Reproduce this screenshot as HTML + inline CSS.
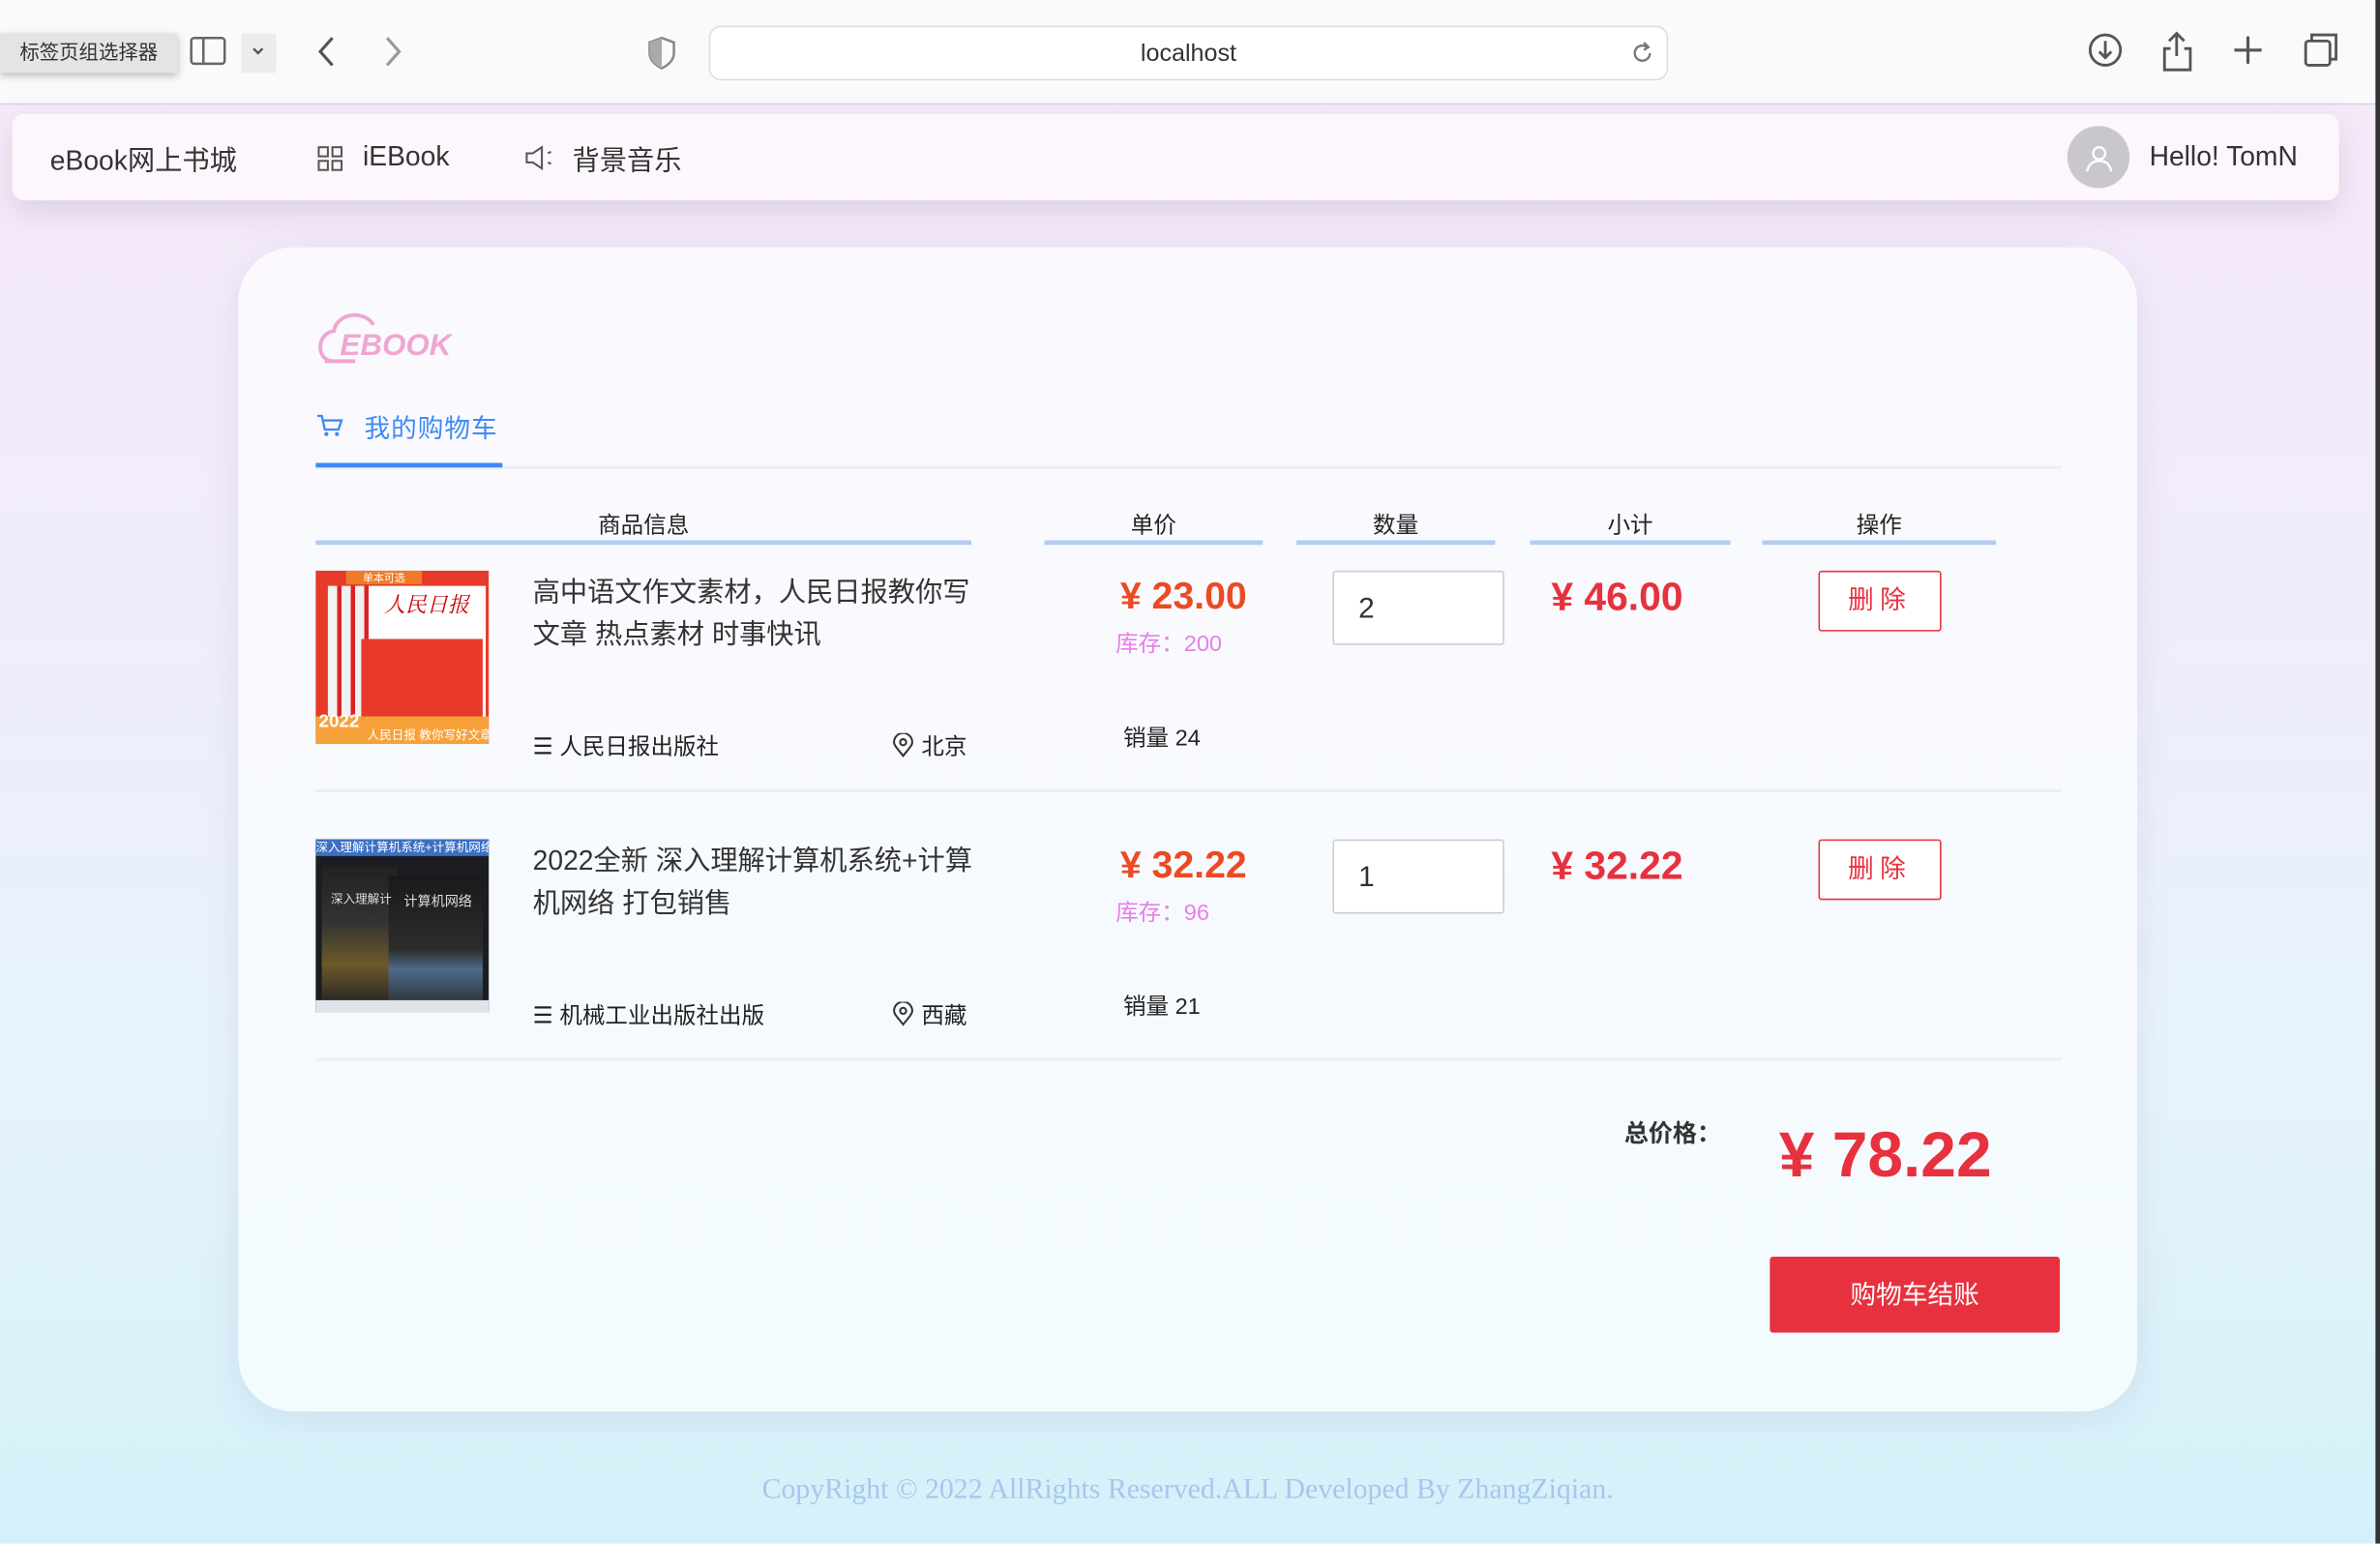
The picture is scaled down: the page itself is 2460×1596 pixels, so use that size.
<!DOCTYPE html>
<html><head><meta charset="utf-8"><style>
html,body{margin:0;padding:0;width:2460px;height:1596px;overflow:hidden;background:#fff}
#w{position:absolute;left:0;top:0;width:1568px;height:1017px;transform:scale(1.5689);transform-origin:0 0;font-family:"Liberation Sans","Noto Sans CJK SC",sans-serif;color:#333;
background:linear-gradient(180deg,#f6e9f8 0%,#f1ecfb 35%,#e6f3fb 70%,#d4f1f9 100%)}
.a{position:absolute;white-space:nowrap}
.tb{left:0;top:0;width:1568px;height:68px;background:#f9fafb;border-bottom:1px solid #d9cfe0}
.nav{left:8px;top:75px;width:1533px;height:57px;background:#fdf6fc;border-radius:8px;box-shadow:0 8px 20px rgba(150,130,170,.25)}
.card{left:157px;top:163px;width:1251px;height:767px;border-radius:36px;background:linear-gradient(180deg,#fbf9fe,#f3fbfe);box-shadow:0 4px 22px rgba(150,140,190,.18)}
.hd{font-size:15px;color:#222;top:335px;text-align:center}
.bar{height:3px;background:#b3ccf5;top:356px}
.t{font-size:18px;color:#333;line-height:28px}
.pr{font-size:25px;font-weight:bold;color:#ec4a24}
.st{font-size:15px;color:#e77fe6}
.sub{font-size:26px;font-weight:bold;color:#e8313e}
.inp{width:113px;height:49px;border:1px solid #ccc;background:#fff;font-size:19px;line-height:49px;padding-left:16px;box-sizing:border-box;border-radius:2px}
.del{width:81px;height:40px;border:1px solid #e8313e;box-sizing:border-box;color:#e8313e;font-size:17px;text-align:center;line-height:38px;letter-spacing:4px;background:#fff;border-radius:2px}
.sm{font-size:15px;color:#222}
.div{height:2px;background:#eceef2;left:208px;width:1150px}
</style></head><body><div id="w">
<div class="a tb"></div>
<div class="a" style="left:0;top:22px;width:117px;height:26px;background:#e4e4e4;box-shadow:0 2px 5px rgba(0,0,0,.25);font-size:13px;line-height:26px;text-align:center;color:#333">标签页组选择器</div>
<svg class="a" style="left:124px;top:22px" width="60" height="26"><rect x="2" y="3" width="22" height="17" rx="2" fill="none" stroke="#666" stroke-width="1.6"/><line x1="10" y1="3" x2="10" y2="20" stroke="#666" stroke-width="1.6"/><rect x="35" y="-4" width="23" height="34" rx="6" fill="#ececec"/><path d="M43 10l3 3 3-3" fill="none" stroke="#555" stroke-width="1.5"/></svg>
<svg class="a" style="left:200px;top:20px" width="80" height="28"><path d="M19 5l-8 9 8 9" fill="none" stroke="#555" stroke-width="2"/><path d="M55 5l8 9-8 9" fill="none" stroke="#999" stroke-width="2"/></svg>
<svg class="a" style="left:426px;top:24px" width="20" height="22"><path d="M10 1l8 3v7c0 5-4 8-8 10-4-2-8-5-8-10V4z" fill="none" stroke="#888" stroke-width="1.6"/><path d="M10 1v20c-4-2-8-5-8-10V4z" fill="#aaa"/></svg>
<div class="a" style="left:467px;top:17px;width:630px;height:34px;border:1px solid #ddd;border-radius:8px;background:#fff;font-size:16px;line-height:36px;text-align:center;color:#333">localhost</div>
<svg class="a" style="left:1073px;top:26px" width="18" height="18"><path d="M14 9a5 5 0 1 1-2-4" fill="none" stroke="#777" stroke-width="1.5"/><path d="M10 2l3 3-3 2" fill="none" stroke="#777" stroke-width="1.5"/></svg>
<svg class="a" style="left:1372px;top:18px" width="175" height="32"><circle cx="15" cy="15" r="10" fill="none" stroke="#555" stroke-width="1.8"/><path d="M15 9v11M11 16l4 4 4-4" fill="none" stroke="#555" stroke-width="1.8"/><path d="M58 14h-4v14h17V14h-4M62 4v15M57 9l5-5 5 5" fill="none" stroke="#555" stroke-width="1.8"/><path d="M109 6v18M100 15h18" stroke="#555" stroke-width="2"/><rect x="147" y="9" width="16" height="16" rx="2" fill="none" stroke="#555" stroke-width="1.8"/><path d="M151 9V5h16v16h-4" fill="none" stroke="#555" stroke-width="1.8"/></svg>
<div class="a" style="left:1565px;top:0;width:3px;height:1017px;background:#333"></div>

<div class="a nav"></div>
<div class="a" style="left:33px;top:92px;font-size:18px;color:#333">eBook网上书城</div>
<svg class="a" style="left:209px;top:96px" width="17" height="17"><g fill="none" stroke="#555" stroke-width="1.3"><rect x="1" y="1" width="6" height="6"/><rect x="10" y="1" width="6" height="6"/><rect x="1" y="10" width="6" height="6"/><rect x="10" y="10" width="6" height="6"/></g></svg>
<div class="a" style="left:239px;top:93px;font-size:18px;color:#333">iEBook</div>
<svg class="a" style="left:345px;top:95px" width="22" height="18"><path d="M2 6h4l6-4v14l-6-4H2z" fill="none" stroke="#555" stroke-width="1.3"/><path d="M16 6l2-1M16 12l2 1" stroke="#555" stroke-width="1.3"/></svg>
<div class="a" style="left:377px;top:92px;font-size:18px;color:#333">背景音乐</div>
<div class="a" style="left:1362px;top:83px;width:41px;height:41px;border-radius:50%;background:#c9c6cc"></div>
<svg class="a" style="left:1372px;top:93px" width="22" height="22"><circle cx="11" cy="8" r="4" fill="none" stroke="#fff" stroke-width="1.5"/><path d="M3 20c1-5 4-7 8-7s7 2 8 7" fill="none" stroke="#fff" stroke-width="1.5"/></svg>
<div class="a" style="left:1416px;top:93px;font-size:18px;color:#333">Hello! TomN</div>

<div class="a card"></div>
<svg class="a" style="left:206px;top:200px" width="95" height="42"><path d="M14 38C2 38 2 20 14 18c2-12 20-14 26-4" fill="none" stroke="#f0a6d2" stroke-width="2.5"/><path d="M8 38h20" stroke="#f0a6d2" stroke-width="2.5"/><text x="18" y="34" font-family="Liberation Sans" font-style="italic" font-weight="bold" font-size="20" fill="#f0a6d2">EBOOK</text></svg>
<svg class="a" style="left:208px;top:272px" width="18" height="17"><path d="M1 2h3l2 9h9l2-6H5" fill="none" stroke="#3d8af7" stroke-width="1.5"/><circle cx="7" cy="14" r="1.3" fill="#3d8af7"/><circle cx="14" cy="14" r="1.3" fill="#3d8af7"/></svg>
<div class="a" style="left:240px;top:268px;font-size:17px;color:#3d8af7;letter-spacing:0.6px">我的购物车</div>
<div class="a" style="left:208px;top:307px;width:1150px;height:2px;background:#eceef2"></div>
<div class="a" style="left:208px;top:305px;width:123px;height:3px;background:#3d8af7"></div>

<div class="a hd" style="left:208px;width:432px">商品信息</div>
<div class="a hd" style="left:688px;width:144px">单价</div>
<div class="a hd" style="left:854px;width:131px">数量</div>
<div class="a hd" style="left:1008px;width:132px">小计</div>
<div class="a hd" style="left:1161px;width:154px">操作</div>
<div class="a bar" style="left:208px;width:432px"></div>
<div class="a bar" style="left:688px;width:144px"></div>
<div class="a bar" style="left:854px;width:131px"></div>
<div class="a bar" style="left:1008px;width:132px"></div>
<div class="a bar" style="left:1161px;width:154px"></div>

<!-- row 1 -->
<div class="a" style="left:208px;top:376px;width:114px;height:114px;background:#e63a2a;overflow:hidden">
<div class="a" style="left:8px;top:10px;width:104px;height:90px;background:linear-gradient(90deg,#f1f1f1 0 6px,#d22 6px 9px,#f1f1f1 9px 15px,#d22 15px 18px,#f1f1f1 18px 24px,#d22 24px 27px,#fff 27px)"></div>
<div class="a" style="left:30px;top:45px;width:80px;height:52px;background:#e8392a"></div>
<div class="a" style="left:20px;top:0;width:50px;height:9px;background:#f07a2a;font-size:7px;color:#fff;text-align:center">单本可选</div>
<div class="a" style="left:45px;top:12px;font-size:14px;font-style:italic;color:#c00;font-family:'Liberation Serif','Noto Serif CJK SC',serif">人民日报</div>
<div class="a" style="left:0;top:96px;width:114px;height:18px;background:#f6a13a"></div>
<div class="a" style="left:2px;top:92px;font-size:12px;color:#fff;font-weight:bold">2022</div>
<div class="a" style="left:34px;top:103px;font-size:8px;color:#fff">人民日报 教你写好文章</div>
</div>
<div class="a t" style="left:351px;top:376px">高中语文作文素材，人民日报教你写<br>文章 热点素材 时事快讯</div>
<div class="a sm" style="left:351px;top:481px">☰ 人民日报出版社</div>
<svg class="a" style="left:588px;top:483px" width="14" height="16"><path d="M7 15C3 10 1 8 1 6a6 6 0 0 1 12 0c0 2-2 4-6 9z" fill="none" stroke="#333" stroke-width="1.3"/><circle cx="7" cy="6" r="2" fill="none" stroke="#333" stroke-width="1.3"/></svg>
<div class="a sm" style="left:607px;top:481px">北京</div>
<div class="a pr" style="left:738px;top:379px">¥ 23.00</div>
<div class="a st" style="left:735px;top:413px">库存：200</div>
<div class="a sm" style="left:740px;top:475px">销量 24</div>
<div class="a inp" style="left:878px;top:376px">2</div>
<div class="a sub" style="left:1022px;top:378px">¥ 46.00</div>
<div class="a del" style="left:1198px;top:376px">删除</div>
<div class="a div" style="top:520px"></div>

<!-- row 2 -->
<div class="a" style="left:208px;top:553px;width:114px;height:114px;background:#1c1d22;overflow:hidden">
<div class="a" style="left:0;top:0;width:114px;height:11px;background:#3b6fc4;font-size:8px;color:#fff;line-height:11px">深入理解计算机系统+计算机网络</div>
<div class="a" style="left:4px;top:18px;width:50px;height:92px;background:linear-gradient(180deg,#222 0,#333 40%,#6d5a2a 70%,#222)"></div>
<div class="a" style="left:48px;top:24px;width:62px;height:88px;background:linear-gradient(180deg,#1a1a1a 0,#2c2c2c 55%,#4d6a8a 70%,#2a2a2a)"></div>
<div class="a" style="left:58px;top:34px;font-size:9px;color:#ddd">计算机网络</div>
<div class="a" style="left:10px;top:34px;font-size:8px;color:#ddd">深入理解计</div>
<div class="a" style="left:0;top:106px;width:114px;height:8px;background:#dfe4ea"></div>
</div>
<div class="a t" style="left:351px;top:553px">2022全新 深入理解计算机系统+计算<br>机网络 打包销售</div>
<div class="a sm" style="left:351px;top:658px">☰ 机械工业出版社出版</div>
<svg class="a" style="left:588px;top:660px" width="14" height="16"><path d="M7 15C3 10 1 8 1 6a6 6 0 0 1 12 0c0 2-2 4-6 9z" fill="none" stroke="#333" stroke-width="1.3"/><circle cx="7" cy="6" r="2" fill="none" stroke="#333" stroke-width="1.3"/></svg>
<div class="a sm" style="left:607px;top:658px">西藏</div>
<div class="a pr" style="left:738px;top:556px">¥ 32.22</div>
<div class="a st" style="left:735px;top:590px">库存：96</div>
<div class="a sm" style="left:740px;top:652px">销量 21</div>
<div class="a inp" style="left:878px;top:553px">1</div>
<div class="a sub" style="left:1022px;top:555px">¥ 32.22</div>
<div class="a del" style="left:1198px;top:553px">删除</div>
<div class="a div" style="top:697px"></div>

<div class="a" style="left:1070px;top:733px;font-size:16px;font-weight:bold;color:#333">总价格：</div>
<div class="a" style="left:1172px;top:737px;font-size:42px;font-weight:bold;color:#e8313e">¥ 78.22</div>
<div class="a" style="left:1166px;top:828px;width:191px;height:50px;background:#e8313e;border-radius:2px;color:#fff;font-size:17px;text-align:center;line-height:52px">购物车结账</div>

<div class="a" style="left:0;width:1565px;top:971px;text-align:center;font-family:'Liberation Serif',serif;font-size:19px;color:#a8c6ee">CopyRight © 2022 AllRights Reserved.ALL Developed By ZhangZiqian.</div>
</div></body></html>
